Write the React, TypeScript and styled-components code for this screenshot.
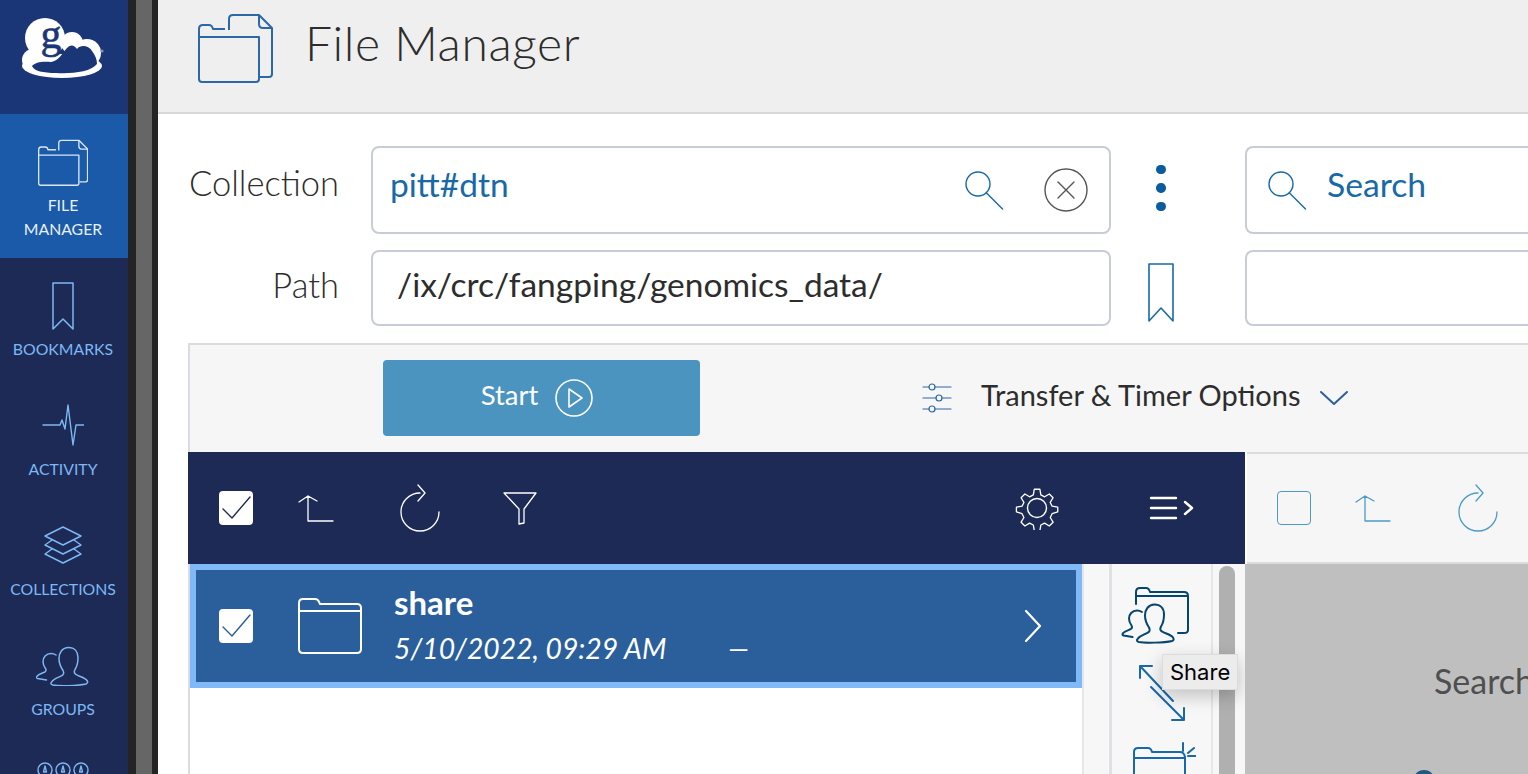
import type { ReactNode } from "react";
import styled, { createGlobalStyle } from "styled-components";

const FONT = `Lato, "Noto Sans", "Liberation Sans", sans-serif`;

type IconProps = { w: number; h: number; color?: string; sw?: number; children: ReactNode };

const GlobalStyle = createGlobalStyle`
  html, body {
    margin: 0;
    padding: 0;
    width: 1528px;
    height: 774px;
    overflow: hidden;
    background: #fff;
    font-family: ${FONT};
  }
  * { box-sizing: border-box; }
`;

const Icon = ({ w, h, color = "currentColor", sw = 1.5, children }: IconProps) => (
  <svg
    width={w}
    height={h}
    viewBox={`0 0 ${w} ${h}`}
    fill="none"
    stroke={color}
    strokeWidth={sw}
    strokeLinecap="round"
    strokeLinejoin="round"
    style={{ display: "block", flex: "none" }}
  >
    {children}
  </svg>
);

const FileManagerIcon = ({ scale, color, sw }: { scale: number; color: string; sw: number }) => (
  <svg width={76 * scale} height={70 * scale} viewBox="0 0 76 70" fill="none" stroke={color} strokeWidth={sw} strokeLinejoin="round" style={{ display: "block" }}>
    <path d="M31 17V6q0-4 4-4h26l13 13v46q0 3-3 3h-9" />
    <path d="M61 2v9q0 4 4 4h9" />
    <path d="M1 24v-8q0-4 4-4h6q3 0 4 4h12" />
    <path d="M1 24h60v42q0 3-3 3H4q-3 0-3-3V24z" />
  </svg>
);

const PeoplePath = () => (
  <>
    <path d="M32.500 1.500c-6 0-9.500 5-9.500 11 0 5 2 9 4 12 1 2 1 4-1 5-3 2-8 3-10 6-2 2-1 3 1 3.500C22 40 42 40 50 38c2-1 2-2 1-3.500-2-3-8-4-11-6-2-1-2-3-1-5 2-3 3-7 3-12 0-6-3.500-10-9.500-10z" />
    <path d="M20 9c-1.500-1-3-1.500-5-1.500-5 0-8 4-8 8 0 3 1 5 2.500 7 1 1.500.500 3-1 3.700-2 1-6 2-7.500 4-1 1-.500 2 .500 2.300l9 1.500" />
  </>
);

const App = () => (
  <Page>
    <GlobalStyle />
    <Sidebar>
      <LogoCell>
        <svg width="84" height="76" viewBox="0 -12 84 76" style={{ display: "block" }}>
          <g fill="#fff">
            <circle cx="24" cy="22" r="20" />
            <circle cx="51" cy="27" r="11" />
            <circle cx="66" cy="37" r="14" />
            <circle cx="12" cy="44" r="11" />
            <ellipse cx="41" cy="50" rx="40" ry="12" />
          </g>
          <path d="M11 50C14 46 22 45 30 46 38 45 42 36 46 32 50 28 53 29 56 33 60 28 68 30 71 35 74 39 76 43 76 48 70 56 50 58 35 57 22 57 13 55 11 50z" fill="#1b3676" />
          <text x="30" y="32" textAnchor="middle" fontFamily="'Liberation Serif', serif" fontSize="42" fill="#1b3676" stroke="#1b3676" strokeWidth="0.6">
            g
          </text>
          <circle cx="81" cy="35" r="1.600" fill="#7f93bd" />
        </svg>
      </LogoCell>
      <NavItem $active $height={144}>
        <NavIcon $top={25} $h={46}>
          <FileManagerIcon scale={0.67} color="#d9e6f6" sw={2} />
        </NavIcon>
        <NavLabel $active>
          FILE
          <br />
          MANAGER
        </NavLabel>
      </NavItem>
      <NavItem $height={120}>
        <NavIcon $top={23} $h={49}>
          <Icon w={24} h={50} color="#7db8f5" sw={1.5}>
            <path d="M2 2h20v46l-10-10-10 10z" />
          </Icon>
        </NavIcon>
        <NavLabel>BOOKMARKS</NavLabel>
      </NavItem>
      <NavItem $height={120}>
        <NavIcon $top={26} $h={46}>
          <Icon w={42} h={42} color="#7db8f5" sw={1.4}>
            <path d="M1 21h17l2-5 3 9 3-24 5 40 3-20h8" />
          </Icon>
        </NavIcon>
        <NavLabel>ACTIVITY</NavLabel>
      </NavItem>
      <NavItem $height={120}>
        <NavIcon $top={27} $h={45}>
          <Icon w={38} h={40} color="#7db8f5" sw={1.4}>
            <path d="M19 2l18 9-18 9-18-9z" />
            <path d="M8 15l-7 5 18 9 18-9-7-5" />
            <path d="M8 24l-7 5 18 9 18-9-7-5" />
          </Icon>
        </NavIcon>
        <NavLabel>COLLECTIONS</NavLabel>
      </NavItem>
      <NavItem $height={120}>
        <NavIcon $top={28} $h={44}>
          <Icon w={54} h={40} color="#7db8f5" sw={1.5}>
            <PeoplePath />
          </Icon>
        </NavIcon>
        <NavLabel>GROUPS</NavLabel>
      </NavItem>
      <ConsoleRow>
        {[0, 1, 2].map((i) => (
          <Icon key={i} w={16} h={16} color="#7db8f5" sw={1.4}>
            <circle cx="8" cy="8" r="7" />
            <path d="M8 4l-1.500 6h3z" />
          </Icon>
        ))}
      </ConsoleRow>
    </Sidebar>
    <Gutter>
      <GutterHandle />
    </Gutter>
    <Main>
      <Header>
        <FileManagerIcon scale={1} color="#2c67a6" sw={2} />
        <Title>File Manager</Title>
      </Header>
      <Content>
        <FormGrid>
          <FieldLabel $top={16}>Collection</FieldLabel>
          <Field $height={88} $gap={40}>
            <CollectionName>pitt#dtn</CollectionName>
            <Icon w={40} h={42} color="#1769a8" sw={1.4}>
              <circle cx="14" cy="15" r="12" />
              <path d="M22.500 24l16 16" />
            </Icon>
            <Icon w={44} h={44} color="#555" sw={1.4}>
              <circle cx="22" cy="22" r="21" />
              <path d="M14 14l16 16M30 14L14 30" />
            </Icon>
          </Field>
          <ActionCell $shift={-4}>
            <Dots>
              <i />
              <i />
              <i />
            </Dots>
          </ActionCell>
          <Field $height={88} $open>
            <Icon w={40} h={42} color="#1769a8" sw={1.4}>
              <circle cx="14" cy="15" r="12" />
              <path d="M22.500 24l16 16" />
            </Icon>
            <SearchLabel>Search</SearchLabel>
          </Field>
          <FieldLabel $top={14}>Path</FieldLabel>
          <Field $height={76}>
            <PathText>/ix/crc/fangping/genomics_data/</PathText>
          </Field>
          <ActionCell $shift={10}>
            <Icon w={28} h={62} color="#1769a8" sw={1.6}>
              <path d="M2 2h24v57L14 46 2 59z" />
            </Icon>
          </ActionCell>
          <Field $height={76} $open />
        </FormGrid>
        <Panel>
          <OptionsBar>
            <StartButton>
              <ButtonText>Start</ButtonText>
              <Icon w={40} h={40} color="#fff" sw={1.6}>
                <circle cx="20" cy="20" r="18" />
                <path d="M15 11l13 9-13 9z" />
              </Icon>
            </StartButton>
            <OptionsToggle>
              <Icon w={30} h={32} color="#2c67a6" sw={1.2}>
                <path d="M1 5h6M13 5h16M1 16h13M20 16h9M1 27h6M13 27h16" />
                <circle cx="10" cy="5" r="3" />
                <circle cx="17" cy="16" r="3" />
                <circle cx="10" cy="27" r="3" />
              </Icon>
              <OptionsText>Transfer &amp; Timer Options</OptionsText>
              <Icon w={30} h={16} color="#2c5f9c" sw={2}>
                <path d="M2 2l13 12L28 2" />
              </Icon>
            </OptionsToggle>
          </OptionsBar>
          <Toolbars>
            <DarkBar>
              <Tools>
                <CheckBox>
                  <Icon w={34} h={34} color="#1c2a55" sw={1.4}>
                    <path d="M4 18l9 9L31 6" />
                  </Icon>
                </CheckBox>
                <Icon w={36} h={34} color="#fff" sw={1.3}>
                  <path d="M1 11l9-6 9 5M10 5v25h25" />
                </Icon>
                <ToolGap $w={66} />
                <Icon w={40} h={48} color="#fff" sw={1.3}>
                  <path d="M20 9a19 19 0 1 0 19 19M18 1l7 8-7 8" />
                </Icon>
                <ToolGap $w={63} />
                <Icon w={34} h={34} color="#fff" sw={1.3}>
                  <path d="M1 2h32L21 18v14l-5 1V18z" />
                </Icon>
              </Tools>
              <Tools>
                <Icon w={44} h={44} color="#fff" sw={1.4}>
                  <circle cx="22" cy="22" r="9.500" />
                  <path d="M19 2h6l1 6 4 2 5-3 4 4-3 5 2 4 6 1v5l-6 2-2 4 3 5-4 4-5-3-4 2-1 6h-6l-1-6-4-2-5 3-4-4 3-5-2-4-6-2v-5l6-1 2-4-3-5 4-4 5 3 4-2z" transform="translate(1.400 1.400) scale(0.94)" />
                </Icon>
                <ToolGap $w={90} />
                <Icon w={46} h={30} color="#fff" sw={2.4}>
                  <path d="M2 5h25M2 15h25M2 25h25M36 9l7 6-7 6" />
                </Icon>
              </Tools>
            </DarkBar>
            <LightBar>
              <EmptyBox />
              <ToolGap $w={44} />
              <Icon w={36} h={34} color="#4c9ac9" sw={1.3}>
                <path d="M1 11l9-6 9 5M10 5v25h25" />
              </Icon>
              <ToolGap $w={67} />
              <Icon w={40} h={48} color="#4c9ac9" sw={1.3}>
                <path d="M20 9a19 19 0 1 0 19 19M18 1l7 8-7 8" />
              </Icon>
            </LightBar>
          </Toolbars>
          <Body>
            <List>
              <Row>
                <CheckBox>
                  <Icon w={34} h={34} color="#2a5f9c" sw={1.4}>
                    <path d="M4 18l9 9L31 6" />
                  </Icon>
                </CheckBox>
                <Icon w={64} h={58} color="#fff" sw={2}>
                  <path d="M1 12V6q0-4 4-4h12q3 0 4 3l1 2h37q4 0 4 4v41q0 4-4 4H5q-4 0-4-4z" />
                  <path d="M1 14h62" />
                </Icon>
                <RowText>
                  <RowName>share</RowName>
                  <RowMeta>
                    <span>5/10/2022, 09:29 AM</span>
                    <span>—</span>
                  </RowMeta>
                </RowText>
                <Icon w={20} h={34} color="#fff" sw={2.2}>
                  <path d="M3 2l14 15L3 32" />
                </Icon>
              </Row>
            </List>
            <Rail />
            <ActionColumn>
              <Icon w={81} h={58} color="#05456f" sw={2}>
                <path d="M15 18V6q0-4 4-4h6q3 0 4 4h34q4 0 4 4v34q0 3-4 3h-6M15 10h52" />
                <g transform="translate(1 17)">
                  <PeoplePath />
                </g>
              </Icon>
              <Icon w={48} h={58} color="#1769a8" sw={2}>
                <path d="M2 2l33 35M2 2v12M2 2h12" />
                <path d="M13 23l33 33M46 56V44M46 56H34" />
              </Icon>
              <Icon w={68} h={60} color="#1769a8" sw={2}>
                <path d="M6 60V10q0-4 4-4h10q3 0 4 4h28q4 0 5 5v45M6 16h51" />
                <path d="M55 1v8M60 11l6-5M60 14h8" />
              </Icon>
              <Tooltip>Share</Tooltip>
            </ActionColumn>
            <ScrollTrack>
              <ScrollThumb />
            </ScrollTrack>
            <RightPane>
              <Prompt>Search</Prompt>
              <PromptDot />
            </RightPane>
          </Body>
        </Panel>
      </Content>
    </Main>
  </Page>
);

/** Styles */
const Page = styled.div`
  display: flex;
  width: 1528px;
  height: 774px;
  overflow: hidden;
`;

const Sidebar = styled.nav`
  width: 128px;
  flex: none;
  background: #1c2a55;
  display: flex;
  flex-direction: column;
`;

const LogoCell = styled.div`
  height: 114px;
  flex: none;
  background: #1b3676;
  padding: 4px 0 0 21px;
`;

const NavItem = styled.div<{ $active?: boolean; $height: number }>`
  height: ${(p) => p.$height}px;
  flex: none;
  padding-right: 2px;
  background: ${(p) => (p.$active ? "#1a5aa8" : "transparent")};
  display: flex;
  flex-direction: column;
  align-items: center;
`;

const NavIcon = styled.div<{ $top: number; $h: number }>`
  margin-top: ${(p) => p.$top}px;
  height: ${(p) => p.$h}px;
`;

const NavLabel = styled.div<{ $active?: boolean }>`
  margin-top: ${(p) => (p.$active ? 8 : 7)}px;
  font-size: 15.800px;
  line-height: 24px;
  text-align: center;
  color: ${(p) => (p.$active ? "#e8f0fa" : "#7db8f5")};
`;

const ConsoleRow = styled.div`
  display: flex;
  flex: none;
  justify-content: center;
  gap: 2px;
  margin-top: 24px;
  padding-right: 2px;
`;

const Gutter = styled.div`
  width: 30px;
  flex: none;
  background: #242424;
  padding: 0 6px 0 8px;
`;

const GutterHandle = styled.div`
  height: 100%;
  background: #666;
`;

const Main = styled.main`
  flex: 1;
  min-width: 0;
  display: flex;
  flex-direction: column;
`;

const Header = styled.header`
  height: 114px;
  flex: none;
  display: flex;
  align-items: center;
  gap: 31px;
  padding: 0 0 16px 40px;
  background: #efefef;
  border-bottom: 2px solid #d8d8d8;
`;

const Title = styled.h1`
  margin: 0 0 12px;
  font-size: 48px;
  font-weight: 300;
  letter-spacing: 0.6px;
  color: #2d2d2d;
`;

const Content = styled.div`
  padding: 32px 0 0 30px;
  width: 1370px;
`;

const FormGrid = styled.div`
  display: grid;
  grid-template-columns: 183px 740px 134px 313px;
  row-gap: 16px;
  margin-bottom: 17px;
`;

const FieldLabel = styled.div<{ $top: number }>`
  padding: ${(p) => p.$top}px 32px 0 0;
  text-align: right;
  font-size: 34.500px;
  line-height: 41px;
  font-weight: 300;
  color: #2d2d2d;
`;

const Field = styled.div<{ $height: number; $open?: boolean; $gap?: number }>`
  height: ${(p) => p.$height}px;
  display: flex;
  align-items: center;
  gap: ${(p) => p.$gap ?? 20}px;
  padding: 0 21px 0 ${(p) => (p.$open ? 20 : 17)}px;
  border: 2px solid #c8ccd6;
  border-radius: 8px;
  ${(p) => p.$open && "border-right: none; border-radius: 8px 0 0 8px;"}
`;

const CollectionName = styled.div`
  flex: 1;
  padding-bottom: 12px;
  font-size: 33.500px;
  color: #1769a8;
`;

const SearchLabel = styled.div`
  padding-bottom: 12px;
  font-size: 33.700px;
  color: #1769a8;
`;

const PathText = styled.div`
  padding: 0 0 8px 7px;
  font-size: 33.500px;
  color: #2d2d2d;
`;

const ActionCell = styled.div<{ $shift: number }>`
  display: flex;
  justify-content: center;
  align-items: center;
  padding-right: 34px;
  padding-top: ${(p) => Math.max(p.$shift, 0)}px;
  padding-bottom: ${(p) => Math.max(-p.$shift, 0)}px;
`;

const Dots = styled.div`
  display: flex;
  flex-direction: column;
  gap: 9px;
  i {
    width: 9.500px;
    height: 9.500px;
    border-radius: 50%;
    background: #0a5c9e;
  }
`;

const Panel = styled.section`
  display: flex;
  flex-direction: column;
  width: 1340px;
  border-top: 2px solid #d9dde0;
`;

const OptionsBar = styled.div`
  height: 107px;
  display: flex;
  align-items: center;
  padding: 0 0 2px 193px;
  gap: 222px;
  background: #f6f6f6;
  border-left: 2px solid #d9dde0;
`;

const StartButton = styled.button`
  width: 317px;
  height: 76px;
  display: flex;
  align-items: center;
  justify-content: center;
  gap: 16px;
  padding: 0 8px 0 0;
  border: none;
  border-radius: 4px;
  background: #4a94bf;
  color: #fff;
  font-family: ${FONT};
  font-size: 27.500px;
`;

const ButtonText = styled.span`
  padding-bottom: 6px;
`;

const OptionsToggle = styled.div`
  display: flex;
  align-items: center;
  gap: 29px;
  color: #2d2d2d;
`;

const OptionsText = styled.span`
  margin-right: -11px;
  padding-bottom: 6px;
  font-size: 29px;
`;

const Toolbars = styled.div`
  display: flex;
  height: 112px;
`;

const DarkBar = styled.div`
  width: 1057px;
  padding: 0 50px 0 31px;
  display: flex;
  align-items: center;
  justify-content: space-between;
  background: #1c2a55;
`;

const Tools = styled.div`
  display: flex;
  align-items: center;
`;

const ToolGap = styled.div<{ $w: number }>`
  width: ${(p) => p.$w}px;
  flex: none;
`;

const CheckBox = styled.div`
  width: 34px;
  height: 34px;
  flex: none;
  margin-right: 45px;
  border-radius: 4px;
  background: #fff;
`;

const LightBar = styled.div`
  flex: 1;
  margin-left: 2px;
  display: flex;
  align-items: center;
  padding-left: 30px;
  background: #f6f6f6;
  border-top: 2px solid #d9dde0;
  border-bottom: 2px solid #d9dde0;
`;

const EmptyBox = styled.div`
  width: 34px;
  height: 34px;
  border: 1.500px solid #4c9ac9;
  border-radius: 4px;
`;

const Body = styled.div`
  display: flex;
  height: 210px;
`;

const List = styled.div`
  width: 894px;
  flex: none;
  background: #fff;
  border-left: 2px solid #d9dde0;
`;

const Row = styled.div`
  height: 124px;
  display: flex;
  align-items: center;
  padding: 0 33px 0 23px;
  background: #2a5f9c;
  border: 6px solid #80b9f8;
  color: #fff;
`;

const RowText = styled.div`
  flex: 1;
  padding: 0 0 3px 32px;
`;

const RowName = styled.div`
  font-size: 33px;
  font-weight: 700;
  line-height: 38px;
`;

const RowMeta = styled.div`
  display: flex;
  gap: 62px;
  margin-top: 9px;
  font-size: 28.300px;
  font-style: italic;
  line-height: 36px;
`;

const Rail = styled.div`
  width: 30px;
  flex: none;
  background: #f7f7f7;
  border-left: 2px solid #e4e6e8;
  border-right: 3px solid #dfe2e5;
`;

const ActionColumn = styled.div`
  position: relative;
  width: 101px;
  flex: none;
  display: flex;
  flex-direction: column;
  align-items: center;
  gap: 20px;
  padding: 22px 0 0 0;
  background: #f7f7f7;
  border-right: 2px solid #e4e6e8;
`;

const Tooltip = styled.div`
  position: absolute;
  top: 90px;
  left: 50px;
  padding: 3px 7px;
  background: #ececec;
  border: 1px solid #dcdcdc;
  color: #000;
  font-family: "Inter", "Liberation Sans", sans-serif;
  font-size: 22px;
  line-height: 28px;
  box-shadow: 0 6px 18px rgba(0, 0, 0, 0.22);
`;

const ScrollTrack = styled.div`
  width: 32px;
  flex: none;
  padding: 2px 10px 0 6px;
  background: #f7f7f7;
`;

const ScrollThumb = styled.div`
  height: 300px;
  background: #b0b0b0;
  border-radius: 8px 8px 0 0;
`;

const RightPane = styled.div`
  position: relative;
  flex: 1;
  display: flex;
  padding: 96px 0 0 189px;
  background: #bfbfbf;
`;

const Prompt = styled.div`
  font-size: 34px;
  color: #4f4f4f;
`;

const PromptDot = styled.div`
  position: absolute;
  left: 168px;
  top: 206px;
  width: 22px;
  height: 22px;
  border-radius: 50%;
  background: #1c5a82;
`;

/** Exports */
export default App;
